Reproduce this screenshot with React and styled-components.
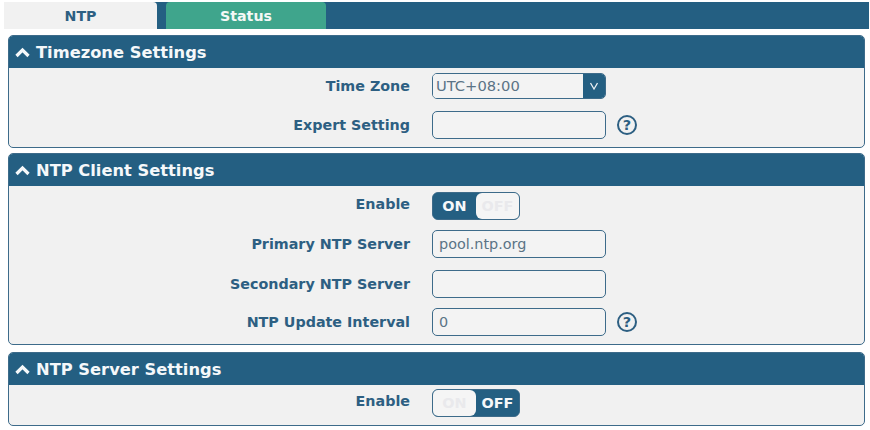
import React from 'react';
import styled, { createGlobalStyle } from 'styled-components';

const Global = createGlobalStyle`
  html, body {
    margin: 0;
    background: #fff;
  }
  body {
    font-family: 'DejaVu Sans', sans-serif;
  }
`;

const Page = styled.div`
  width: 870px;
  height: 430px;
  overflow: hidden;
  padding-top: 2px;
  box-sizing: border-box;
`;

const TabBar = styled.div`
  display: flex;
  height: 27px;
  margin: 0 1px 6px 4px;
  background: #245f82;
`;

const Tab = styled.div`
  display: flex;
  align-items: center;
  justify-content: center;
  width: ${({ $active }) => ($active ? '153px' : '160px')};
  margin-right: 9px;
  border-radius: 0 4px 0 0;
  border-top-left-radius: ${({ $active }) => ($active ? '0' : '4px')};
  background: ${({ $active }) => ($active ? '#f1f1f1' : '#3fa58c')};
  color: ${({ $active }) => ($active ? '#2d5f82' : '#f4f8f6')};
  font-size: 14.2px;
  font-weight: 700;
`;

const Stack = styled.div`
  display: flex;
  flex-direction: column;
  gap: 5px;
  margin: 0 5px 0 8px;
`;

const Panel = styled.section`
  box-sizing: border-box;
  height: ${({ $height }) => $height}px;
  margin-bottom: ${({ $after }) => $after || 0}px;
  border: 1px solid #3d6b8a;
  border-radius: 5px;
  background: #f1f1f1;
  overflow: hidden;
`;

const PanelHeader = styled.h2`
  display: flex;
  align-items: center;
  gap: 6px;
  box-sizing: border-box;
  height: 33px;
  margin: -1px -1px 0;
  padding: 2px 0 0 7px;
  background: #245f82;
  color: #f5f8fa;
  font-size: 16.3px;
  font-weight: 700;
`;

const PanelBody = styled.div`
  display: flex;
  flex-direction: column;
  gap: 11px;
  padding-top: ${({ $top }) => $top}px;
`;

const Row = styled.div`
  display: grid;
  grid-template-columns: 401px 174px auto;
  column-gap: 22px;
  align-items: center;
  height: 28px;
  margin-top: ${({ $shift }) => $shift || 0}px;
`;

const Label = styled.label`
  padding-bottom: ${({ $raised }) => ($raised ? '4px' : '0')};
  text-align: right;
  color: #2d5f82;
  font-size: 14.3px;
  font-weight: 700;
`;

const TextInput = styled.input`
  box-sizing: border-box;
  width: 174px;
  height: 28px;
  padding: 0 6px;
  border: 1px solid #3d6b8a;
  border-radius: 5px;
  background: #f3f3f3;
  color: #5b7386;
  font-family: inherit;
  font-size: 14.4px;
  outline: none;
`;

const SelectBox = styled.div`
  display: flex;
  box-sizing: border-box;
  width: 174px;
  height: 26px;
  border: 1px solid #3d6b8a;
  border-radius: 5px;
  overflow: hidden;
`;

const Select = styled.select`
  flex: 1;
  min-width: 0;
  padding: 0 3px 2px;
  border: 0;
  appearance: none;
  background: #f3f3f3;
  color: #5b7386;
  font-family: inherit;
  font-size: 14.7px;
  outline: none;
`;

const SelectArrow = styled.span`
  display: flex;
  align-items: center;
  justify-content: center;
  width: 22px;
  background: #245f82;
`;

const Toggle = styled.div`
  display: flex;
  box-sizing: border-box;
  width: 88px;
  height: 28px;
  border: 1px solid #3d6b8a;
  border-radius: 6px;
  overflow: hidden;
  background: #245f82;
`;

const ToggleSide = styled.span`
  display: flex;
  align-items: center;
  justify-content: center;
  width: 50%;
  border-radius: ${({ $on, $left }) => ($on ? '0' : $left ? '0 6px 6px 0' : '6px 0 0 6px')};
  background: ${({ $on }) => ($on ? '#245f82' : '#f5f5f5')};
  color: ${({ $on }) => ($on ? '#f5f8fa' : '#e9e9ec')};
  font-size: 14.4px;
  font-weight: 700;
`;

const Help = styled.span`
  display: flex;
  align-items: center;
  justify-content: center;
  box-sizing: border-box;
  width: 20px;
  height: 20px;
  margin-left: -11px;
  border: 2px solid #2d5f82;
  border-radius: 50%;
  color: #2d5f82;
  font-size: 14.5px;
  font-weight: 700;
`;

const Chevron = () => (
  <svg width="15" height="11" viewBox="0 0 15 11" fill="none" stroke="currentColor" strokeWidth="3.2">
    <path d="M1.5 9 7.5 3 13.5 9" />
  </svg>
);

const Switch = ({ on }) => (
  <Toggle>
    <ToggleSide $left $on={on}>ON</ToggleSide>
    <ToggleSide $on={!on}>OFF</ToggleSide>
  </Toggle>
);

const Section = ({ title, height, after, top, children }) => (
  <Panel $height={height} $after={after}>
    <PanelHeader>
      <Chevron />
      {title}
    </PanelHeader>
    <PanelBody $top={top}>{children}</PanelBody>
  </Panel>
);

export default function App() {
  return (
    <Page>
      <Global />
      <TabBar>
        <Tab $active>NTP</Tab>
        <Tab>Status</Tab>
      </TabBar>
      <Stack>
        <Section title="Timezone Settings" height={113} top={4}>
          <Row>
            <Label>Time Zone</Label>
            <SelectBox>
              <Select defaultValue="UTC+08:00">
                <option>UTC+08:00</option>
              </Select>
              <SelectArrow>
                <svg width="10" height="8" viewBox="0 0 10 8" fill="none" stroke="#e8eef2" strokeWidth="1.3">
                  <path d="M1.5 1 5 7 8.5 1" />
                </svg>
              </SelectArrow>
            </SelectBox>
          </Row>
          <Row>
            <Label>Expert Setting</Label>
            <TextInput readOnly value="" />
            <Help>?</Help>
          </Row>
        </Section>
        <Section title="NTP Client Settings" height={192} after={2} top={6}>
          <Row>
            <Label $raised>Enable</Label>
            <Switch on />
          </Row>
          <Row $shift={-1}>
            <Label>Primary NTP Server</Label>
            <TextInput readOnly value="pool.ntp.org" />
          </Row>
          <Row $shift={1}>
            <Label>Secondary NTP Server</Label>
            <TextInput readOnly value="" />
          </Row>
          <Row $shift={-1}>
            <Label>NTP Update Interval</Label>
            <TextInput readOnly value="0" />
            <Help>?</Help>
          </Row>
        </Section>
        <Section title="NTP Server Settings" height={74} top={4}>
          <Row>
            <Label $raised>Enable</Label>
            <Switch on={false} />
          </Row>
        </Section>
      </Stack>
    </Page>
  );
}
